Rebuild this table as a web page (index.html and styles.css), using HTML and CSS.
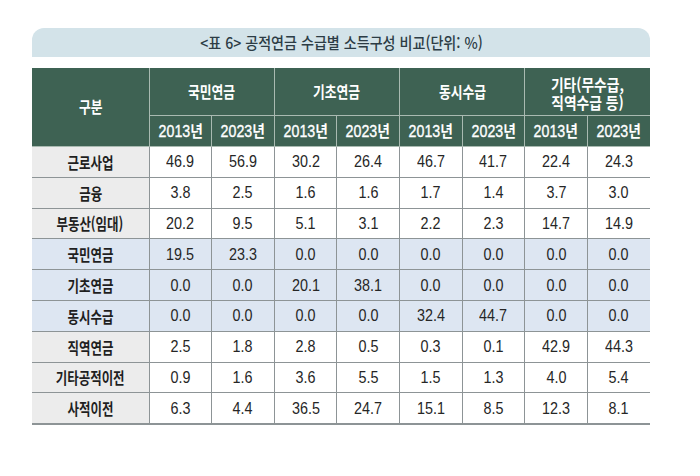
FILE: index.html
```html
<!DOCTYPE html>
<html lang="ko">
<head>
<meta charset="utf-8">
<link rel="stylesheet" href="styles.css">
</head>
<body>
<div class="page">
  <div class="title"><span class="tt">&lt;표 6&gt; 공적연금 수급별 소득구성 비교(단위: %)</span></div>
  <table class="grid">
    <colgroup>
      <col class="c-label">
      <col><col><col><col><col><col><col><col>
    </colgroup>
    <thead>
      <tr class="h1">
        <th rowspan="2" class="first"><span class="hk">구분</span></th>
        <th colspan="2"><span class="hk">국민연금</span></th>
        <th colspan="2"><span class="hk">기초연금</span></th>
        <th colspan="2"><span class="hk">동시수급</span></th>
        <th colspan="2" class="last"><span class="hk two"><span class="ln">기타(무수급,</span><span class="ln">직역수급 등)</span></span></th>
      </tr>
      <tr class="h2">
        <th><span class="hy">2013<span class="yr">년</span></span></th><th><span class="hy">2023<span class="yr">년</span></span></th>
        <th><span class="hy">2013<span class="yr">년</span></span></th><th><span class="hy">2023<span class="yr">년</span></span></th>
        <th><span class="hy">2013<span class="yr">년</span></span></th><th><span class="hy">2023<span class="yr">년</span></span></th>
        <th><span class="hy">2013<span class="yr">년</span></span></th><th class="last"><span class="hy">2023<span class="yr">년</span></span></th>
      </tr>
    </thead>
    <tbody>
      <tr><td class="lab"><span class="k">근로사업</span></td><td><span class="n">46.9</span></td><td><span class="n">56.9</span></td><td><span class="n">30.2</span></td><td><span class="n">26.4</span></td><td><span class="n">46.7</span></td><td><span class="n">41.7</span></td><td><span class="n">22.4</span></td><td><span class="n">24.3</span></td></tr>
      <tr><td class="lab"><span class="k">금융</span></td><td><span class="n">3.8</span></td><td><span class="n">2.5</span></td><td><span class="n">1.6</span></td><td><span class="n">1.6</span></td><td><span class="n">1.7</span></td><td><span class="n">1.4</span></td><td><span class="n">3.7</span></td><td><span class="n">3.0</span></td></tr>
      <tr><td class="lab"><span class="k">부동산(임대)</span></td><td><span class="n">20.2</span></td><td><span class="n">9.5</span></td><td><span class="n">5.1</span></td><td><span class="n">3.1</span></td><td><span class="n">2.2</span></td><td><span class="n">2.3</span></td><td><span class="n">14.7</span></td><td><span class="n">14.9</span></td></tr>
      <tr class="hl"><td class="lab"><span class="k">국민연금</span></td><td><span class="n">19.5</span></td><td><span class="n">23.3</span></td><td><span class="n">0.0</span></td><td><span class="n">0.0</span></td><td><span class="n">0.0</span></td><td><span class="n">0.0</span></td><td><span class="n">0.0</span></td><td><span class="n">0.0</span></td></tr>
      <tr class="hl"><td class="lab"><span class="k">기초연금</span></td><td><span class="n">0.0</span></td><td><span class="n">0.0</span></td><td><span class="n">20.1</span></td><td><span class="n">38.1</span></td><td><span class="n">0.0</span></td><td><span class="n">0.0</span></td><td><span class="n">0.0</span></td><td><span class="n">0.0</span></td></tr>
      <tr class="hl"><td class="lab"><span class="k">동시수급</span></td><td><span class="n">0.0</span></td><td><span class="n">0.0</span></td><td><span class="n">0.0</span></td><td><span class="n">0.0</span></td><td><span class="n">32.4</span></td><td><span class="n">44.7</span></td><td><span class="n">0.0</span></td><td><span class="n">0.0</span></td></tr>
      <tr><td class="lab"><span class="k">직역연금</span></td><td><span class="n">2.5</span></td><td><span class="n">1.8</span></td><td><span class="n">2.8</span></td><td><span class="n">0.5</span></td><td><span class="n">0.3</span></td><td><span class="n">0.1</span></td><td><span class="n">42.9</span></td><td><span class="n">44.3</span></td></tr>
      <tr><td class="lab"><span class="k">기타공적이전</span></td><td><span class="n">0.9</span></td><td><span class="n">1.6</span></td><td><span class="n">3.6</span></td><td><span class="n">5.5</span></td><td><span class="n">1.5</span></td><td><span class="n">1.3</span></td><td><span class="n">4.0</span></td><td><span class="n">5.4</span></td></tr>
      <tr class="end"><td class="lab"><span class="k">사적이전</span></td><td><span class="n">6.3</span></td><td><span class="n">4.4</span></td><td><span class="n">36.5</span></td><td><span class="n">24.7</span></td><td><span class="n">15.1</span></td><td><span class="n">8.5</span></td><td><span class="n">12.3</span></td><td><span class="n">8.1</span></td></tr>
    </tbody>
  </table>
</div>
</body>
</html>
```

FILE: styles.css
```css
html, body {
  margin: 0;
  padding: 0;
  background: #ffffff;
}

body {
  font-family: "Liberation Sans", "Noto Sans CJK KR", sans-serif;
  color: #222222;
}

.page {
  width: 618px;
  padding: 28px 0 0 32px;
}

.title {
  height: 29px;
  line-height: 29px;
  background: #d3e3e9;
  border-radius: 12px 12px 0 0;
  text-align: center;
  font-family: "Noto Sans CJK KR", sans-serif;
  font-weight: 500;
  font-size: 16px;
  color: #2c3c45;
  white-space: nowrap;
}

.tt {
  display: inline-block;
  transform: scaleX(0.88);
}

.grid {
  margin-top: 11px;
  width: 618px;
  table-layout: fixed;
  border-collapse: collapse;
}

.c-label {
  width: 117px;
}

.grid th {
  background: #3e6253;
  color: #ffffff;
  font-weight: 400;
  border: 1px solid #a9bab1;
  padding: 0;
  white-space: nowrap;
}

.hk {
  display: inline-block;
  font-family: "Noto Sans CJK KR", sans-serif;
  font-weight: 600;
  font-size: 16px;
  line-height: 19px;
  transform: scaleX(0.8);
}

.hk.two {
  display: inline-flex;
  flex-direction: column;
  align-items: center;
  font-size: 16px;
  transform: scaleX(0.86);
  padding-top: 2px;
}

.ln {
  display: block;
  height: 18px;
  line-height: 18px;
}

.hy {
  display: inline-block;
  font-size: 16.5px;
  line-height: 19px;
  transform: scaleX(0.86);
  -webkit-text-stroke: 0.35px #ffffff;
}

.yr {
  font-family: "Noto Sans CJK KR", sans-serif;
  font-weight: 600;
  font-size: 16px;
  -webkit-text-stroke: 0;
}

.grid thead tr.h1 th {
  border-top: none;
  height: 47px;
}

.grid thead tr.h2 th {
  height: 30px;
}

.grid th.first {
  border-left: none;
}

.grid th.last {
  border-right: none;
}

.grid td {
  height: 29.8px;
  padding: 0;
  text-align: center;
  border: 1px solid #8d9496;
  background: #ffffff;
  color: #262626;
  white-space: nowrap;
}

.n {
  display: inline-block;
  font-size: 16.5px;
  transform: scaleX(0.87);
}

.grid td:first-child {
  border-left: none;
}

.grid td:last-child {
  border-right: none;
}

.grid td.lab {
  background: #ececec;
  color: #1f1f1f;
}

.k {
  display: inline-block;
  font-family: "Noto Sans CJK KR", sans-serif;
  font-weight: 600;
  font-size: 16px;
  transform: scaleX(0.78);
}

.grid tr.hl td {
  background: #dde6f2;
}

.grid tr.hl td.lab {
  background: #dde6f2;
}

.grid tr.end td {
  border-bottom: 2px solid #8d9496;
}
```
